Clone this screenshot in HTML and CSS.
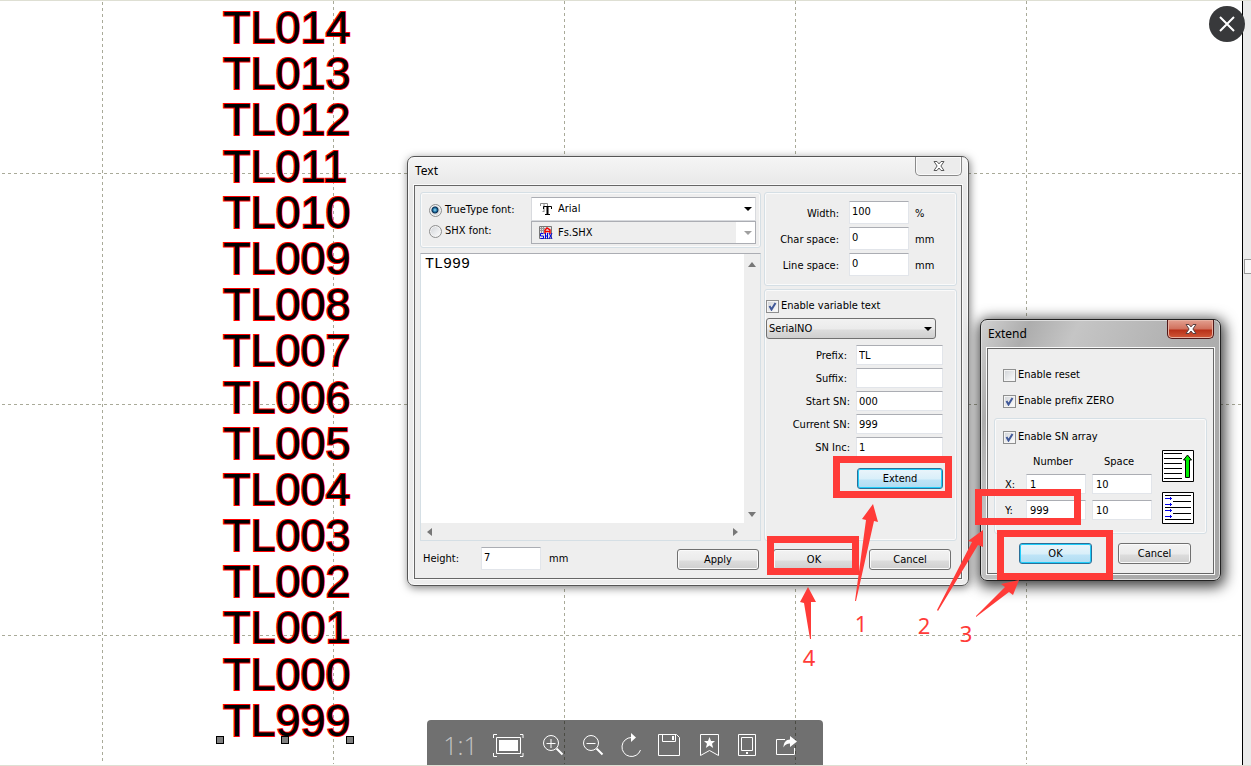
FILE: index.html
```html
<!DOCTYPE html>
<html lang="en">
<head>
<meta charset="utf-8">
<title>Text array</title>
<link rel="stylesheet" href="styles.css">
</head>
<body>
<main class="viewer">
  <svg class="guides" aria-hidden="true">
    <line x1="102.5" y1="2" x2="102.5" y2="100%"/><line x1="333.5" y1="1" x2="333.5" y2="100%"/>
    <line x1="564.5" y1="1" x2="564.5" y2="100%"/><line x1="795.5" y1="1" x2="795.5" y2="100%"/>
    <line x1="1026.5" y1="1" x2="1026.5" y2="100%"/>
    <line x1="2" y1="173.5" x2="100%" y2="173.5"/><line x1="2" y1="404.5" x2="100%" y2="404.5"/><line x1="2" y1="635.5" x2="100%" y2="635.5"/>
  </svg>

  <div class="serials">
    <span>TL014</span><span>TL013</span><span>TL012</span><span>TL011</span>
    <span>TL010</span><span>TL009</span><span>TL008</span><span>TL007</span>
    <span>TL006</span><span>TL005</span><span>TL004</span><span>TL003</span>
    <span>TL002</span><span>TL001</span><span>TL000</span><span>TL999</span>
    <div class="handles"><i></i><i></i><i></i></div>
  </div>

  <aside class="edge"><span class="edge-thumb"></span></aside>

  <section class="window text-window" aria-label="Text">
    <header class="titlebar">
      <h1>Text</h1>
      <button class="win-close" type="button" aria-label="Close Text">
        <svg width="14" height="12" viewBox="0 0 14 12"><path d="M2 1.5h3l2 2.400 2-2.400h3L8.900 6 12 10.500H9L7 8 5 10.500H2L5.100 6z" fill="#fff" stroke="#5a5a5a"/></svg>
      </button>
    </header>
    <div class="client">
      <div class="columns">
        <div class="left">
          <div class="group fonts">
            <label><input type="radio" name="font" checked>TrueType font:</label>
            <div class="combo">
              <svg class="combo-icon" width="14" height="14" viewBox="0 0 14 14"><path d="M1.500 4V1.500h7V4M5 1v8M3.500 9.500h2" fill="none" stroke="#8a8a8a"/><path d="M4.500 7V4.500h8V7M6 12.500h5" fill="none" stroke="#000"/><path d="M8.500 4v8" stroke="#000" stroke-width="2"/></svg>
              <select aria-label="TrueType font"><option>Arial</option></select>
              <svg class="combo-arrow" width="8" height="4"><path d="M0 0h8L4 4z"/></svg>
            </div>
            <label><input type="radio" name="font">SHX font:</label>
            <div class="combo off">
              <svg class="combo-icon" width="14" height="14" viewBox="0 0 14 14"><path d="M.5.5h12v12H.5z" fill="#e4e4e4" stroke="#777"/><path d="M2.500 1v6M4.500 1v6M1 2.500h5M1 4.500h5" stroke="#999"/><path d="M6 8V4l2-2 3 2v4M6 5.500h5" fill="none" stroke="#f00000" stroke-width="1.500"/><path d="M4.500 7.500h-3v2.500h3v2.500h-3M6.500 7v6M6 10h2.500M8.500 7v6M10 7l3 6M13 7l-3 6" fill="none" stroke="#0000e0"/></svg>
              <select aria-label="SHX font" disabled><option>Fs.SHX</option></select>
              <svg class="combo-arrow" width="8" height="4"><path d="M0 0h8L4 4z"/></svg>
            </div>
          </div>
          <div class="editor">
            <textarea aria-label="Text content">TL999</textarea>
            <div class="vbar"><svg width="8" height="5"><path d="M0 5h8L4 0z"/></svg><svg width="8" height="5"><path d="M0 0h8L4 5z"/></svg></div>
            <div class="hbar"><svg width="5" height="8"><path d="M5 0v8L0 4z"/></svg><svg width="5" height="8"><path d="M0 0v8l5-4z"/></svg></div>
          </div>
        </div>
        <div class="right">
          <div class="group metrics">
            <label for="w">Width:</label><input id="w" type="text" value="100"><span>%</span>
            <label for="cs">Char space:</label><input id="cs" type="text" value="0"><span>mm</span>
            <label for="ls">Line space:</label><input id="ls" type="text" value="0"><span>mm</span>
          </div>
          <div class="group variable">
            <label class="check"><input type="checkbox" checked>Enable variable text</label>
            <div class="combo kind">
              <select aria-label="Variable type"><option>SerialNO</option></select>
              <svg class="combo-arrow" width="8" height="4"><path d="M0 0h8L4 4z"/></svg>
            </div>
            <div class="serial-fields">
              <label class="short" for="pre">Prefix:</label><input id="pre" type="text" value="TL">
              <label class="short" for="suf">Suffix:</label><input id="suf" type="text">
              <label for="st">Start SN:</label><input id="st" type="text" value="000">
              <label for="cur">Current SN:</label><input id="cur" type="text" value="999">
              <label for="inc">SN Inc:</label><input id="inc" type="text" value="1">
            </div>
            <button class="btn primary extend" type="button">Extend</button>
          </div>
        </div>
      </div>
      <footer class="actions">
        <label for="h">Height:</label><input id="h" type="text" value="7"><span>mm</span>
        <div class="buttons">
          <button class="btn" type="button">Apply</button>
          <button class="btn" type="button">OK</button>
          <button class="btn" type="button">Cancel</button>
        </div>
      </footer>
    </div>
  </section>

  <section class="window extend-window" aria-label="Extend">
    <header class="titlebar">
      <h1>Extend</h1>
      <button class="win-close red" type="button" aria-label="Close Extend">
        <svg width="14" height="12" viewBox="0 0 14 12"><path d="M2 1.500h3l2 2.400 2-2.400h3L8.900 6 12 10.500H9L7 8 5 10.500H2L5.100 6z" fill="#fff" stroke="#5a4040"/></svg>
      </button>
    </header>
    <div class="client">
      <div class="options">
        <label class="check"><input type="checkbox">Enable reset</label>
        <label class="check"><input type="checkbox" checked>Enable prefix ZERO</label>
      </div>
      <div class="group array">
        <div class="array-fields">
          <label class="check"><input type="checkbox" checked>Enable SN array</label>
          <span class="head">Number</span><span class="head last">Space</span>
          <label for="xn">X:</label><input id="xn" type="text" value="1"><input type="text" value="10" aria-label="X space">
          <label for="yn">Y:</label><input id="yn" type="text" value="999"><input type="text" value="10" aria-label="Y space">
        </div>
        <div class="array-icons">
          <svg width="32" height="32" viewBox="0 0 32 32"><path d="M.5.5h31v31H.5z" fill="#fff" stroke="#000"/><path d="M2 3.500h18M2 8.500h18M2 13.500h18M2 18.500h18M2 23.500h18M2 28.500h18" stroke="#000"/><path d="M25.500 5l4 5h-2v17.500h-4V10h-2z" fill="#00f000" stroke="#000"/></svg>
          <svg width="32" height="32" viewBox="0 0 32 32"><path d="M.5.5h31v31H.5z" fill="#fff" stroke="#000"/><path d="M3 3.500h26M11 9.500h18M3 15.500h26M11 21.500h18M3 27.500h26" stroke="#000"/><path d="M3 6.500h7M3 12.500h7M3 18.500h7M3 24.500h7M8.500 5v3M8.500 11v3M8.500 17v3M8.500 23v3" stroke="#0000e8"/></svg>
        </div>
      </div>
      <div class="buttons">
        <button class="btn primary" type="button">OK</button>
        <button class="btn" type="button">Cancel</button>
      </div>
    </div>
  </section>

  <svg class="marks" role="img" aria-label="Steps">
    <g class="boxes">
      <rect x="836.5" y="459.5" width="112" height="35"/>
      <rect x="770.5" y="539.5" width="85" height="32"/>
      <rect x="978.5" y="492.5" width="99" height="29"/>
      <rect x="1000.5" y="533.5" width="109" height="43"/>
    </g>
    <g class="arrows">
      <path d="M873 504l5 18-4-1-18 80h-1l11-81-4-1z"/>
      <path d="M983 530v17l-5-2-40 66-1-1 35-68-4-1z"/>
      <path d="M1019 580l-6 15-4-3-33 25v-1l29-29-4-3z"/>
      <path d="M808 587l8 15h-5v37h-1l-6-36-4-1z"/>
    </g>
    <text x="861" y="632">1</text><text x="924" y="634">2</text><text x="966" y="642">3</text><text x="809" y="666">4</text>
  </svg>

  <nav class="toolbar" aria-label="Image tools">
    <button type="button" class="ratio">1:1</button>
    <button type="button" aria-label="Full screen"><svg width="32" height="24" viewBox="0 0 32 24"><path d="M5 1.500H1.500V5M28 1.500h3V5M5 23.500H1.500V20M28 23.500h3V20M4.500 4.500h24v16h-24z"/><path class="fill" d="M7 7h19v11H7z"/></svg></button>
    <button type="button" aria-label="Zoom in"><svg width="24" height="24" viewBox="0 0 24 24"><circle cx="11" cy="10" r="7.500"/><path d="M6.500 10.500h9M11 6v9"/><path class="thick" d="M16.500 15.500l6 6"/></svg></button>
    <button type="button" aria-label="Zoom out"><svg width="24" height="24" viewBox="0 0 24 24"><circle cx="11" cy="10" r="7.500"/><path d="M6.500 10.500h9"/><path class="thick" d="M16.500 15.500l6 6"/></svg></button>
    <button type="button" aria-label="Rotate"><svg width="22" height="26" viewBox="0 0 22 26"><path d="M11.500 5.500A9.500 9.500 0 1 0 20.500 18"/><path class="fill" d="M11 1l5 4.500-5 4.500z"/></svg></button>
    <button type="button" aria-label="Save"><svg width="24" height="24" viewBox="0 0 24 24"><path d="M.5 1.500h18l3 3v18H.5zM4.500 1.500v7h13v-7"/><path class="thick" d="M15 3v4"/></svg></button>
    <button type="button" aria-label="Favorite"><svg width="22" height="24" viewBox="0 0 22 24"><path d="M2.500 1.500h18v21l-9-5-9 5z"/><path class="fill" d="M11.500 4l1.500 4h4l-3 2.800 1.200 4.200-3.700-2.500L7.800 15 9 10.800 6 8h4z"/></svg></button>
    <button type="button" aria-label="Phone"><svg width="22" height="24" viewBox="0 0 22 24"><path d="M2.500 1.500h17v21h-17zM5.500 4.500h11v13h-11z"/><path class="fill" d="M10 19h2v2h-2z"/></svg></button>
    <button type="button" aria-label="Share"><svg width="24" height="22" viewBox="0 0 24 22"><path d="M11 5.500H2.500v15h18V14"/><path class="fill" d="M16 2l7 5.500-7 5.500V9.500c-3 0-5 1-6.500 4 0-5 2.500-8 6.500-8z"/></svg></button>
  </nav>

  <button class="viewer-close" type="button" aria-label="Close viewer"><svg width="18" height="18" viewBox="0 0 18 18"><path d="M2 2l14 14M16 2L2 16"/></svg></button>
</main>
</body>
</html>
```

FILE: styles.css
```css
* { box-sizing: border-box; }

body {
  margin: 0;
  font: 11px/14px "DejaVu Sans Condensed", "Noto Sans", sans-serif;
  color: #000;
}

button, input, select, textarea { font: inherit; color: inherit; margin: 0; }
input[type="text"], select, textarea { border-radius: 0; }

.viewer {
  position: relative;
  min-height: 100vh;
  overflow: hidden;
  background: #fff;
  border-top: 1px solid #dedfd3;
  border-bottom: 1px solid #dedfd3;
}

.guides, .marks {
  position: absolute;
  inset: -1px 0 0;
  width: 100%;
  height: 100%;
}
.guides line { stroke: #a9aa99; stroke-dasharray: 3 3; }

/* Engraved serial numbers */
.serials {
  position: absolute;
  left: 223px;
  top: 4px;
  height: 739px;
  display: flex;
  flex-direction: column;
  justify-content: space-between;
  font: 45px/46px "Liberation Sans", Arial, sans-serif;
  -webkit-text-stroke: 2px #f00;
  paint-order: stroke fill;
}
.handles {
  position: absolute;
  left: -7px;
  right: -3px;
  bottom: 0;
  display: flex;
  justify-content: space-between;
}
.handles i { width: 8px; height: 8px; background: #808080; border: 1px solid #000; }

.edge {
  position: absolute;
  top: 0;
  bottom: 0;
  right: 0;
  width: 9px;
  padding-top: 258px;
  background: #ebebeb;
  border-left: 1px solid #000;
}
.edge-thumb {
  display: block;
  height: 15px;
  margin-left: 1px;
  border: 1px solid #999;
  border-right: 0;
  background: #f8f8f8;
}

/* Windows */
.window {
  position: absolute;
  padding: 0 6px 6px;
  border: 1px solid #555;
  border-radius: 7px;
}
.text-window {
  left: 407px;
  top: 155px;
  width: 562px;
  background: linear-gradient(#f5f5f5, #e8e8e8 30px, #ededed);
  box-shadow: inset 0 0 0 1px #fafafa, 1px 2px 8px rgba(0, 0, 0, .5);
}
.extend-window {
  left: 980px;
  top: 318px;
  width: 241px;
  border-color: #222;
  background: linear-gradient(115deg, #d2d2d2, #adadad 45px, #c5c5c5 90px, #b0b0b0 190px, #a5a5a5);
  box-shadow: inset 0 0 0 1px #ddd, 1px 3px 14px 3px rgba(0, 0, 0, .75);
}
.titlebar {
  display: flex;
  justify-content: space-between;
  align-items: flex-start;
  height: 28px;
}
.titlebar h1 { margin: 7px 0 0 1px; font: 12px/14px "Noto Sans", sans-serif; }
.win-close {
  display: flex;
  justify-content: center;
  align-items: center;
  width: 47px;
  height: 19px;
  padding: 0;
  border: 1px solid #8a8a8a;
  border-top: 0;
  border-radius: 0 0 5px 5px;
  background: #ececec;
  box-shadow: inset 0 0 0 1px #fafafa;
}
.win-close.red {
  border-color: #501818;
  background: linear-gradient(#e3a090, #d0705c 9px, #b83018 10px, #d05838);
  box-shadow: inset 0 0 0 1px #e8b0a0;
}
.client {
  border: 1px solid #666;
  background: #eee;
  outline: 1px solid #fafafa;
}
.text-window .client { padding: 6px 4px 8px 5px; }

.group {
  border: 1px solid #d5dfe5;
  border-radius: 3px;
  box-shadow: inset 0 0 0 1px #fafafa;
}
label { display: flex; align-items: center; white-space: nowrap; }

input[type="text"] {
  width: 100%;
  min-width: 0;
  height: 20px;
  padding: 0 2px;
  border: 1px solid #e2e5ea;
  border-top-color: #abadb3;
  background: #fff;
}

input[type="radio"], input[type="checkbox"] {
  appearance: none;
  flex: none;
  width: 13px;
  height: 13px;
  margin-right: 2px;
  border: 1px solid #8e8f8f;
  background: linear-gradient(135deg, #cfd2d6, #fff);
  box-shadow: inset 0 0 0 1px #f4f4f4;
}
input[type="radio"] { margin-right: 3px; border-radius: 50%; }
input[type="radio"]:checked { background: radial-gradient(circle at 45% 45%, #9fe0fa, #1b6fa0 2px, #0d2c50 3px, #d8dcde 4px); }
input[type="checkbox"]:checked {
  background: url("data:image/svg+xml,%3Csvg xmlns='http://www.w3.org/2000/svg' viewBox='0 0 11 11'%3E%3Cpath d='M2.500 5l2 3.500L8.500 2' fill='none' stroke='%23405898' stroke-width='2'/%3E%3C/svg%3E"), linear-gradient(135deg, #cfd2d6, #fff);
}

.btn {
  width: 82px;
  height: 21px;
  padding: 0;
  border: 1px solid #707070;
  border-radius: 3px;
  background: linear-gradient(#f2f2f2, #ebebeb 10px, #dcdcdc 11px, #cfcfcf);
  box-shadow: inset 0 0 0 1px #fafafa;
}
.btn.primary {
  border-color: #2c6f98;
  background: linear-gradient(#eaf5fb, #d9eff9 10px, #bee4f7 11px, #b0dcf2);
  box-shadow: inset 0 0 0 1px #20cdfa;
}

/* Text window */
.columns { display: grid; grid-template-columns: 1fr 193px; gap: 3px; }
.left, .right { display: flex; flex-direction: column; }
.left { gap: 5px; }
.right { gap: 3px; }

.fonts {
  display: grid;
  grid-template-columns: 1fr 225px;
  grid-template-rows: 24px 23px;
  padding: 4px 4px 3px 8px;
}
.fonts label:nth-of-type(1) { padding-top: 2px; }
.fonts label:nth-of-type(2) { padding-bottom: 3px; }
.combo { position: relative; display: flex; }
.combo select {
  appearance: none;
  width: 100%;
  padding: 0 20px 0 26px;
  border: 1px solid #d8dade;
  border-top-color: #abadb3;
  background: #fff;
  opacity: 1;
}
.combo.off select { border-color: #abadb3; background: linear-gradient(to left, #fff 19px, #eee 19px); }
.combo-icon, .combo-arrow { position: absolute; top: 50%; transform: translateY(-50%); pointer-events: none; }
.combo-icon { left: 8px; }
.combo-arrow { right: 4px; }
.off .combo-arrow { fill: #a0a0a0; }

.editor {
  display: grid;
  grid-template-columns: 1fr 16px;
  grid-template-rows: 269px 17px;
  border: 1px solid #d5dfe5;
  border-top-color: #abadb3;
  background: #eee;
}
.editor textarea {
  display: block;
  resize: none;
  padding: 2px 4px;
  border: 0;
  outline: 0;
  background: #fff;
  overflow: hidden;
  font: 15px/18px "Liberation Mono", monospace;
}
.vbar, .hbar { display: flex; align-items: center; justify-content: space-between; fill: #777; }
.vbar { flex-direction: column; padding: 8px 0 6px; }
.hbar { padding: 0 6px; }

.metrics {
  display: grid;
  grid-template-columns: 74px 60px 1fr;
  gap: 3px 10px;
  align-items: center;
  padding: 8px 0 9px;
}
.metrics label, .serial-fields label { justify-content: flex-end; }
.metrics label, .metrics span { padding-top: 2px; }
.metrics span { margin-left: -4px; }
.metrics input, .actions input { height: 23px; padding-bottom: 3px; }

.variable { flex: 1; padding: 8px 1px 49px; }
.variable .check { line-height: 16px; }
.kind { width: 170px; height: 21px; margin-top: 4px; }
.kind select {
  padding: 0 2px;
  border: 1px solid #707070;
  border-radius: 3px;
  background: linear-gradient(#f2f2f2, #ebebeb 10px, #dcdcdc 11px, #cfcfcf);
}
.serial-fields {
  display: grid;
  grid-template-columns: 84px 87px;
  gap: 3px 6px;
  margin-top: 6px;
}
.serial-fields label { padding-top: 2px; }
.serial-fields .short { padding-right: 3px; }
.extend { display: block; width: 86px; margin: 11px 0 0 91px; }

.actions { display: flex; align-items: center; margin-top: 6px; padding: 0 6px 0 3px; }
.actions label { width: 58px; }
.actions input { width: 60px; }
.actions > span { margin-left: 8px; }
.buttons { display: flex; }
.actions .buttons { gap: 14px; margin-left: auto; padding-top: 2px; }

/* Extend window */
.extend-window .client { padding: 0 6px 9px; }
.options { display: grid; gap: 12px; padding: 19px 9px 10px; }
.array { display: flex; justify-content: space-between; padding: 11px 12px 9px 8px; }
.array-fields {
  display: grid;
  grid-template-columns: 17px 60px 60px;
  grid-template-rows: 14px 18px 20px 20px;
  column-gap: 6px;
  row-gap: 6px;
  margin-bottom: 4px;
}
.array-fields .check { grid-column: 1 / -1; }
.array-fields .head { grid-column: 2; padding: 5px 0 0 7px; }
.array-fields .head.last { grid-column: 3; padding-left: 12px; }
.array-fields label:not(.check) { padding: 2px 0 0 2px; }
.array-fields input[type="text"] { padding-left: 3px; }
.array-icons { display: grid; gap: 10px; align-content: end; }
.extend-window .buttons { gap: 26px; padding: 9px 0 0 25px; }
.extend-window .buttons .btn { width: 73px; }

/* Annotations */
.marks { pointer-events: none; fill: #ff3b38; }
.boxes { fill: none; stroke: #ff3b38; stroke-width: 7; }
.marks text { font: 22px "Noto Sans", sans-serif; text-anchor: middle; }

/* Viewer controls */
.toolbar {
  position: absolute;
  left: 427px;
  bottom: 0;
  display: flex;
  align-items: center;
  gap: 16px;
  height: 45px;
  padding: 4px 25px 0 18px;
  border-radius: 4px 4px 0 0;
  background: rgba(0, 0, 0, .56);
}
.toolbar button { display: flex; justify-content: center; padding: 0; border: 0; background: none; }
.toolbar svg { fill: none; stroke: #fff; }
.toolbar .fill { fill: #fff; stroke: none; }
.toolbar .thick { stroke-width: 2; }
.toolbar .ratio { width: 31px; color: #c4c4c4; font: 300 25px/30px "Open Sans", sans-serif; }

.viewer-close {
  position: absolute;
  top: 5px;
  right: 6px;
  display: grid;
  place-items: center;
  width: 36px;
  height: 36px;
  padding: 0;
  border: 0;
  border-radius: 50%;
  background: #38393b;
}
.viewer-close svg { fill: none; stroke: #fff; stroke-width: 2; }
```
